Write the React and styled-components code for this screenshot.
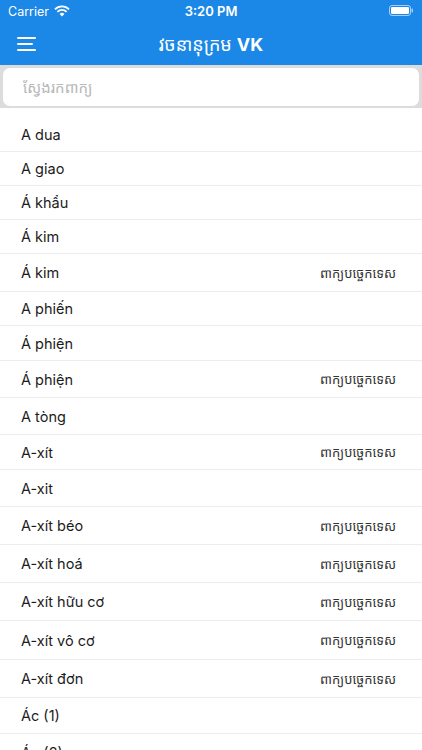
import React from 'react';
import styled, { createGlobalStyle } from 'styled-components';

const GlobalStyle = createGlobalStyle`
    html, body {
        margin: 0;
        padding: 0;
        background: #ffffff;
    }
    body {
        font-family: Inter, "Noto Sans", "Noto Sans Khmer", "Khmer OS", sans-serif;
        -webkit-font-smoothing: antialiased;
    }
`;

const Screen = styled.div`
    width: 422px;
    height: 750px;
    overflow: hidden;
    background: #ffffff;
`;

const TopBar = styled.header`
    background: #1b87e6;
    color: #ffffff;
`;

const StatusBar = styled.div`
    height: 22px;
    display: grid;
    grid-template-columns: 1fr auto 1fr;
    align-items: center;
    padding: 0 8px;
    font-size: 12.5px;

    .left {
        display: flex;
        align-items: center;
        gap: 5px;
    }
    .time {
        font-weight: 600;
        font-size: 13px;
    }
    .right {
        display: flex;
        justify-content: flex-end;
    }
`;

const NavBar = styled.div`
    height: 43px;
    display: grid;
    grid-template-columns: 60px 1fr 60px;
    align-items: center;
`;

const MenuButton = styled.button`
    border: 0;
    background: none;
    padding: 0 0 0 17px;
    height: 100%;
    display: flex;
    flex-direction: column;
    justify-content: center;
    gap: 4px;
    cursor: pointer;
`;

const Bar = styled.span`
    display: block;
    height: 2px;
    width: ${p => p.$w}px;
    background: #ffffff;
    border-radius: 1px;
`;

const Title = styled.h1`
    margin: 0;
    text-align: center;
    font-size: 18px;
    font-weight: 400;
    color: #ffffff;

    b {
        font-weight: 700;
    }
`;

const SearchArea = styled.div`
    background: #dcdcdc;
    padding: 3px 3px 2px;
`;

const SearchInput = styled.input`
    box-sizing: border-box;
    display: block;
    width: 100%;
    height: 38px;
    border: 0;
    border-radius: 7px;
    background: #ffffff;
    padding: 0 20px;
    font-size: 15px;
    outline: none;
    font-family: inherit;

    &::placeholder {
        color: #b8b8b8;
    }
`;

const List = styled.ul`
    list-style: none;
    margin: 0;
    padding: 10px 0 0;
`;

const Row = styled.li`
    box-sizing: border-box;
    height: ${p => p.$h}px;
    display: flex;
    align-items: center;
    justify-content: space-between;
    padding: 0 26px 0 21px;
    border-bottom: 1px solid #ececec;
    font-size: 14.5px;
    color: #1c1c1c;
`;

const Tag = styled.span`
    font-size: 13px;
    color: #333333;
`;

const TAG = 'ពាក្យបច្ចេកទេស';

const words = [
    { w: 'A dua', h: 34 },
    { w: 'A giao', h: 34 },
    { w: 'Á khẩu', h: 34 },
    { w: 'Á kim', h: 34 },
    { w: 'Á kim', h: 38, tag: true },
    { w: 'A phiến', h: 34 },
    { w: 'Á phiện', h: 35 },
    { w: 'Á phiện', h: 37, tag: true },
    { w: 'A tòng', h: 37 },
    { w: 'A-xít', h: 35, tag: true },
    { w: 'A-xit', h: 37 },
    { w: 'A-xít béo', h: 38, tag: true },
    { w: 'A-xít hoá', h: 38, tag: true },
    { w: 'A-xít hữu cơ', h: 38, tag: true },
    { w: 'A-xít vô cơ', h: 39, tag: true },
    { w: 'A-xít đơn', h: 38, tag: true },
    { w: 'Ác (1)', h: 36 },
    { w: 'Ác (2)', h: 38 },
];

const Wifi = () => (
    <svg width="16" height="12" viewBox="0 0 16 12">
        <path d="M8 11.5 L5.6 9 A3.4 3.4 0 0 1 10.4 9 Z" fill="#fff" />
        <path d="M3.4 6.8 A6.5 6.5 0 0 1 12.6 6.8" stroke="#fff" strokeWidth="1.8" fill="none" />
        <path d="M1 4.3 A10 10 0 0 1 15 4.3" stroke="#fff" strokeWidth="1.8" fill="none" />
    </svg>
);

const Battery = () => (
    <svg width="25" height="12" viewBox="0 0 25 12">
        <rect x="0.5" y="0.5" width="21" height="10" rx="2.5" stroke="#fff" strokeOpacity="0.6" fill="none" />
        <rect x="2" y="2" width="18" height="7" rx="1.3" fill="#fff" />
        <rect x="22.5" y="3.5" width="1.5" height="4" rx="0.7" fill="#fff" fillOpacity="0.6" />
    </svg>
);

const App = () => {
    return (
        <>
            <GlobalStyle />
            <Screen>
                <TopBar>
                    <StatusBar>
                        <div className="left">Carrier <Wifi /></div>
                        <div className="time">3:20 PM</div>
                        <div className="right"><Battery /></div>
                    </StatusBar>
                    <NavBar>
                        <MenuButton aria-label="menu">
                            <Bar $w={19} />
                            <Bar $w={16} />
                            <Bar $w={19} />
                        </MenuButton>
                        <Title>វចនានុក្រម <b>VK</b></Title>
                        <div />
                    </NavBar>
                </TopBar>
                <SearchArea>
                    <SearchInput placeholder="ស្វែងរកពាក្យ" />
                </SearchArea>
                <List>
                    {words.map((item, i) => (
                        <Row key={i} $h={item.h}>
                            <span>{item.w}</span>
                            {item.tag && <Tag>{TAG}</Tag>}
                        </Row>
                    ))}
                </List>
            </Screen>
        </>
    );
};

export default App;
